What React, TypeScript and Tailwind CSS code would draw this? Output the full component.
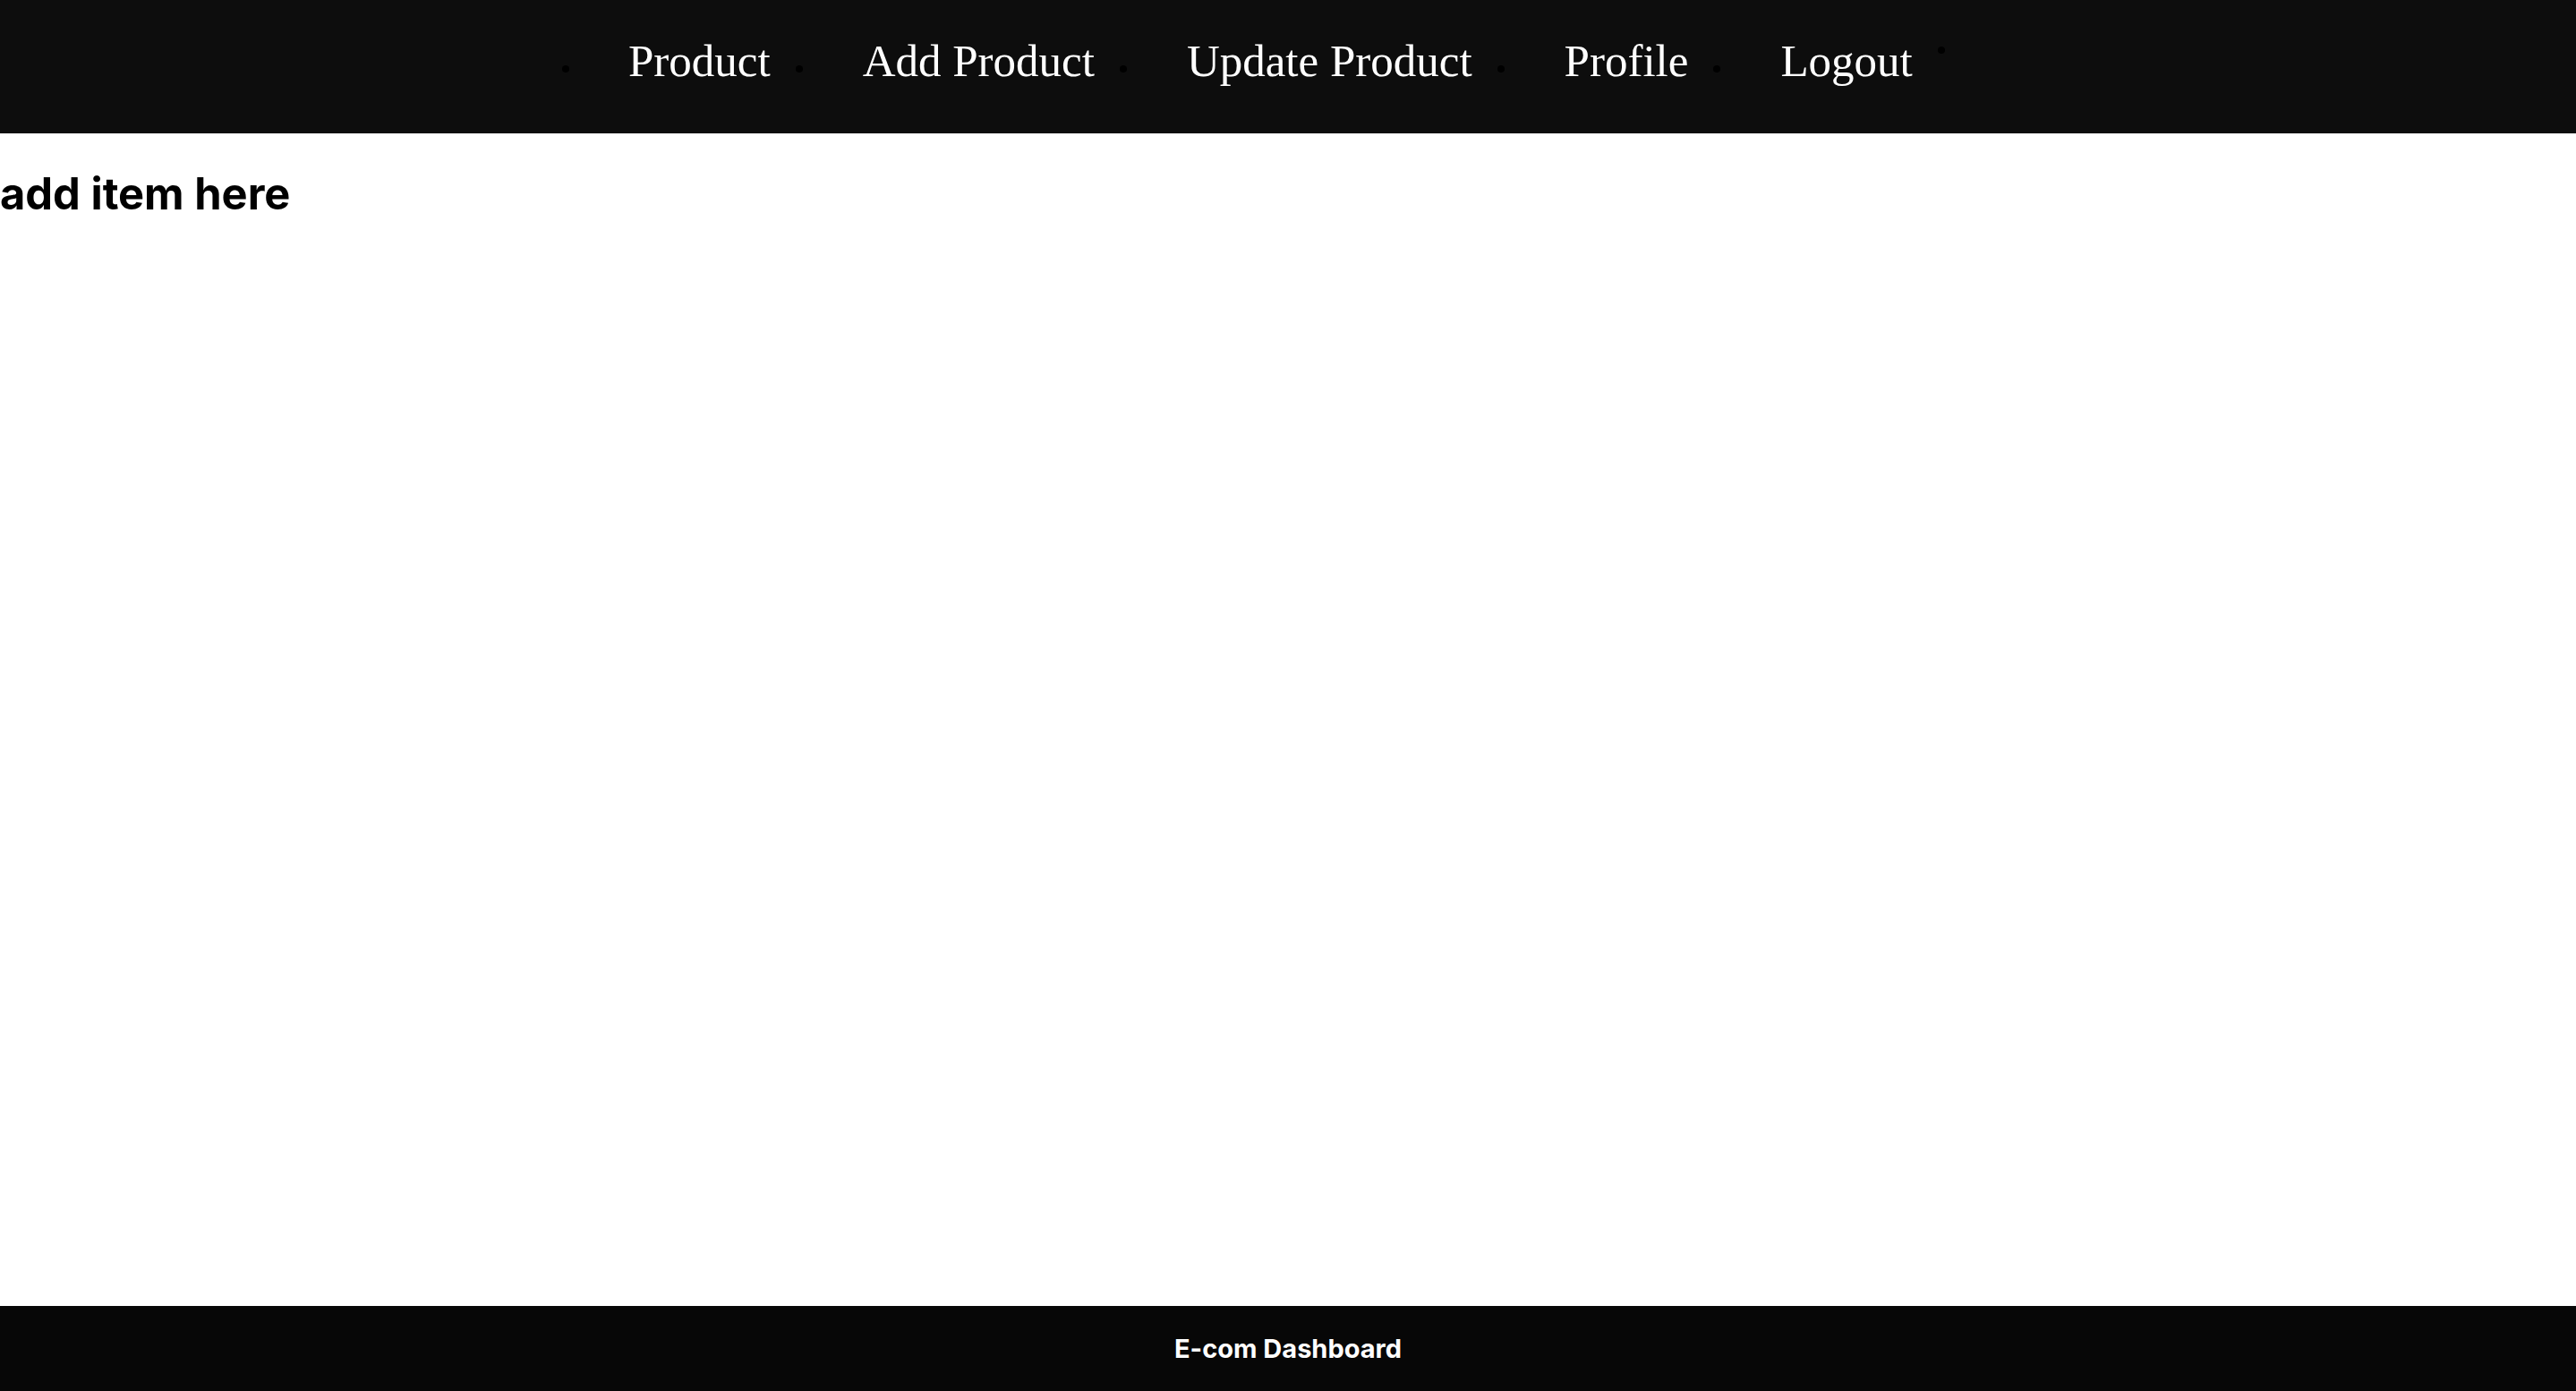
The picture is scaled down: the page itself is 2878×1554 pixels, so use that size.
import React from "react";

const items = ["Product", "Add Product", "Update Product", "Profile", "Logout"];

export default function App() {
  return (
    <div className="min-h-screen flex flex-col bg-white" style={{ fontFamily: "Inter, sans-serif" }}>
      <nav className="h-[149px] bg-[#0d0d0d] flex items-start pl-[628px]">
        {items.map((t, i) => (
          <React.Fragment key={t}>
            <span className={`w-2 h-2 rounded-full bg-black mt-[73px] ${i === 0 ? "" : "ml-[28px]"}`} />
            <span
              className={`${i === 0 ? "ml-[66px]" : "ml-[67px]"} mt-[39px] text-[51px] leading-[58px] text-white font-['Liberation_Serif',serif]`}
            >
              {t}
            </span>
          </React.Fragment>
        ))}
        <span className="w-2 h-2 rounded-full bg-black mt-[52px] ml-[28px]" />
      </nav>
      <main className="flex-1">
        <h1 className="mt-[39px] text-[48.8px] leading-[58px] font-bold text-black">add item here</h1>
      </main>
      <footer className="h-[95px] bg-[#070707] flex items-center justify-center">
        <span className="text-white text-[29px] font-bold">E-com Dashboard</span>
      </footer>
    </div>
  );
}
